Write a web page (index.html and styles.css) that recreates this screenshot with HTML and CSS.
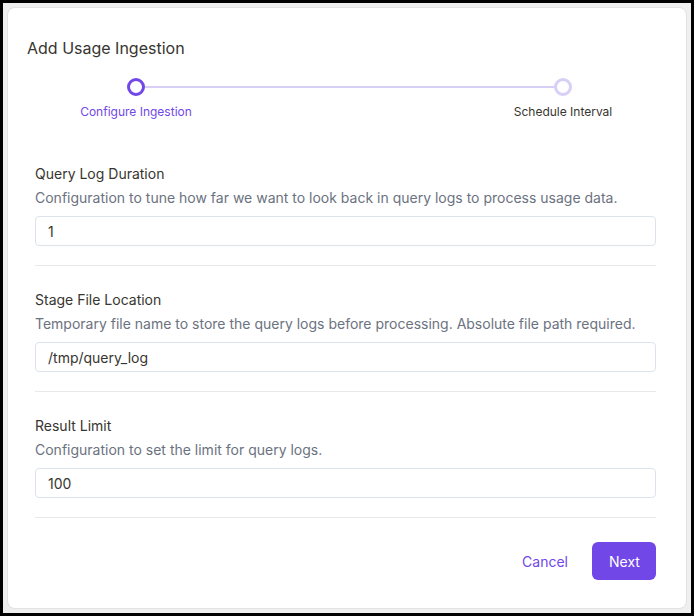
FILE: index.html
```html
<!DOCTYPE html>
<html lang="en">
<head>
<meta charset="utf-8">
<title>Add Usage Ingestion</title>
<link rel="stylesheet" href="styles.css">
</head>
<body>
<div class="frame">
  <div class="card">
    <h1 class="title">Add Usage Ingestion</h1>
    <div class="steps">
      <div class="step active">
        <span class="dot"></span>
        <span class="step-label">Configure Ingestion</span>
      </div>
      <div class="step-line"></div>
      <div class="step">
        <span class="dot"></span>
        <span class="step-label">Schedule Interval</span>
      </div>
    </div>
    <form class="form">
      <div class="field">
        <label class="label" for="f1">Query Log Duration</label>
        <p class="desc">Configuration to tune how far we want to look back in query logs to process usage data.</p>
        <input class="input" id="f1" type="text" value="1">
      </div>
      <div class="field">
        <label class="label" for="f2">Stage File Location</label>
        <p class="desc">Temporary file name to store the query logs before processing. Absolute file path required.</p>
        <input class="input" id="f2" type="text" value="/tmp/query_log">
      </div>
      <div class="field">
        <label class="label" for="f3">Result Limit</label>
        <p class="desc">Configuration to set the limit for query logs.</p>
        <input class="input" id="f3" type="text" value="100">
      </div>
      <div class="actions">
        <button type="button" class="btn btn-link">Cancel</button>
        <button type="button" class="btn btn-primary">Next</button>
      </div>
    </form>
  </div>
</div>
</body>
</html>
```
FILE: styles.css
```css
* { box-sizing: border-box; }
html, body { margin: 0; padding: 0; }
body {
  background: #000;
  width: 694px;
  height: 616px;
  padding: 3px;
  font-family: Inter, "Noto Sans", sans-serif;
  color: #37352f;
}
.frame {
  background: #efefef;
  height: 100%;
  padding: 4px;
}
.card {
  background: #fff;
  border: 1px solid #e2e2e2;
  border-radius: 8px;
  height: 602px;
  padding: 28px 22px 0 19px;
}
.title {
  margin: 0;
  font-size: 16px;
  line-height: 24px;
  font-weight: 400;
  color: #37352f;
}
.steps {
  display: flex;
  margin-top: 18px;
  padding: 0 41px 0 49px;
}
.step {
  width: 120px;
  display: flex;
  flex-direction: column;
  align-items: center;
  position: relative;
  z-index: 1;
}
.dot {
  width: 18px;
  height: 18px;
  border-radius: 50%;
  border: 3px solid #d8cff6;
  background: #fff;
}
.step.active .dot { border-color: #7147e8; }
.step-label {
  margin-top: 7px;
  font-size: 12px;
  line-height: 18px;
  color: #37352f;
  white-space: nowrap;
}
.step.active .step-label { color: #7147e8; }
.step-line {
  flex: 1;
  height: 2px;
  margin: 8px -51px 0;
  background: #d8cff6;
}
.form {
  padding: 0 8px;
  margin-top: 42px;
}
.field {
  border-bottom: 1px solid #e6e8eb;
  padding-bottom: 19px;
  margin-bottom: 23px;
}
.label {
  display: block;
  font-size: 14px;
  line-height: 22px;
  color: #37352f;
}
.desc {
  margin: 2px 0 7px;
  font-size: 14px;
  line-height: 22px;
  color: #6b7280;
}
.input {
  display: block;
  width: 100%;
  height: 30px;
  border: 1px solid #dde3ea;
  border-radius: 4px;
  padding: 0 12px;
  font-family: Inter, "Noto Sans", sans-serif;
  font-size: 14px;
  color: #37352f;
  background: #fff;
  outline: none;
}
.actions {
  display: flex;
  justify-content: flex-end;
  align-items: center;
  gap: 8px;
  margin-top: 24px;
}
.btn {
  font-family: Inter, "Noto Sans", sans-serif;
  font-size: 14px;
  height: 38px;
  border-radius: 6px;
  border: none;
  cursor: pointer;
}
.btn-link {
  background: transparent;
  color: #7147e8;
  padding: 0 16px;
}
.btn-primary {
  background: #7147e8;
  color: #fff;
  padding: 0 17px;
  width: 64px;
}
```
